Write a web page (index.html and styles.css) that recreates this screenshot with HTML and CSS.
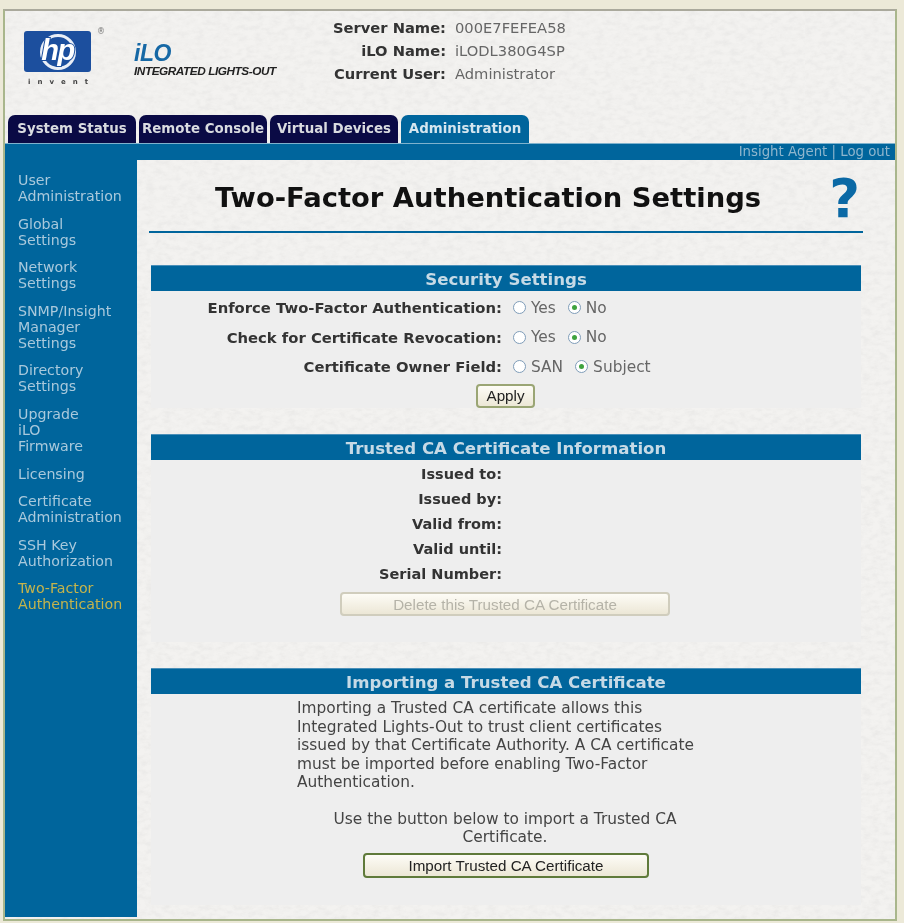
FILE: index.html
```html
<!DOCTYPE html>
<html lang="en">
<head>
    <meta charset="UTF-8">
    <meta name="viewport" content="width=device-width, initial-scale=1.0">
    <title>Two-Factor Authentication Settings - iLO</title>
    <link rel="stylesheet" href="styles.css">
</head>
<body>
    <div class="frame">
        <div class="header">
            <div class="logo">
                <div class="hp-box">
                    <div class="hp-circle"></div>
                    <span class="hp-text">hp</span>
                </div>
                <span class="hp-reg">®</span>
                <div class="hp-invent">invent</div>
            </div>
            <div class="ilo">
                <div class="ilo-name">iLO</div>
                <div class="ilo-sub">INTEGRATED LIGHTS-OUT</div>
            </div>
            <div class="server-info">
                <b>Server Name:</b><span>000E7FEFEA58</span>
                <b>iLO Name:</b><span>iLODL380G4SP</span>
                <b>Current User:</b><span>Administrator</span>
            </div>
        </div>

        <div class="tabs">
            <a class="tab" href="#">System Status</a>
            <a class="tab" href="#">Remote Console</a>
            <a class="tab" href="#">Virtual Devices</a>
            <a class="tab active" href="#">Administration</a>
        </div>

        <div class="strip">
            <a href="#">Insight Agent</a> | <a href="#">Log out</a>
        </div>

        <div class="main">
            <div class="sidebar">
                <a href="#">User<br>Administration</a>
                <a href="#">Global<br>Settings</a>
                <a href="#">Network<br>Settings</a>
                <a href="#">SNMP/Insight<br>Manager<br>Settings</a>
                <a href="#">Directory<br>Settings</a>
                <a href="#">Upgrade<br>iLO<br>Firmware</a>
                <a href="#">Licensing</a>
                <a href="#">Certificate<br>Administration</a>
                <a href="#">SSH Key<br>Authorization</a>
                <a class="current" href="#">Two-Factor<br>Authentication</a>
            </div>

            <div class="content">
                <div class="title-row">
                    <h1>Two-Factor Authentication Settings</h1>
                    <span class="help">?</span>
                </div>

                <div class="section security">
                    <h2>Security Settings</h2>
                    <div class="form-row">
                        <b>Enforce Two-Factor Authentication:</b>
                        <div class="options">
                            <label><input type="radio" name="enforce">Yes</label>
                            <label><input type="radio" name="enforce" checked>No</label>
                        </div>
                    </div>
                    <div class="form-row">
                        <b>Check for Certificate Revocation:</b>
                        <div class="options">
                            <label><input type="radio" name="revoke">Yes</label>
                            <label><input type="radio" name="revoke" checked>No</label>
                        </div>
                    </div>
                    <div class="form-row">
                        <b>Certificate Owner Field:</b>
                        <div class="options">
                            <label><input type="radio" name="owner">SAN</label>
                            <label><input type="radio" name="owner" checked>Subject</label>
                        </div>
                    </div>
                    <button class="btn apply-btn">Apply</button>
                </div>

                <div class="section trusted">
                    <h2>Trusted CA Certificate Information</h2>
                    <div class="info-row"><b>Issued to:</b></div>
                    <div class="info-row"><b>Issued by:</b></div>
                    <div class="info-row"><b>Valid from:</b></div>
                    <div class="info-row"><b>Valid until:</b></div>
                    <div class="info-row"><b>Serial Number:</b></div>
                    <button class="btn delete-btn" disabled>Delete this Trusted CA Certificate</button>
                </div>

                <div class="section importing">
                    <h2>Importing a Trusted CA Certificate</h2>
                    <p class="import-text">Importing a Trusted CA certificate allows this Integrated Lights-Out to trust client certificates issued by that Certificate Authority. A CA certificate must be imported before enabling Two-Factor Authentication.</p>
                    <p class="import-note">Use the button below to import a Trusted CA Certificate.</p>
                    <button class="btn import-btn">Import Trusted CA Certificate</button>
                </div>
            </div>
        </div>
    </div>
</body>
</html>
```
FILE: styles.css
```css
html, body {
    height: 100%;
}
body {
    margin: 0;
    background-color: #ece9d8;
    font-family: "DejaVu Sans", Verdana, sans-serif;
    font-size: 14px;
    color: #333;
    overflow: hidden;
}
a {
    color: inherit;
    text-decoration: none;
}
.frame {
    box-sizing: border-box;
    width: 894px;
    height: 912px;
    margin: 9px 0 0 3px;
    background-color: #f3f2f0;
    background-image: url("data:image/svg+xml,%3Csvg xmlns='http://www.w3.org/2000/svg' width='400' height='400'%3E%3Cfilter id='p'%3E%3CfeTurbulence type='fractalNoise' baseFrequency='0.12 0.2' numOctaves='3'/%3E%3CfeColorMatrix values='0 0 0 0 0.5 0 0 0 0 0.5 0 0 0 0 0.5 0.3 0 0 0 -0.11'/%3E%3C/filter%3E%3Crect width='400' height='400' filter='url(%23p)'/%3E%3C/svg%3E");
    border: 2px solid #a9b68c;
    border-top-color: #aaa99c;
    filter: blur(0.5px);
}

/* top of the page */
.header {
    display: flex;
    height: 104px;
}
.logo {
    position: relative;
    width: 129px;
    flex-shrink: 0;
}
.hp-box {
    position: relative;
    width: 67px;
    height: 41px;
    margin: 20px 0 0 19px;
    background-color: #1c4f9e;
    border-radius: 3px;
    display: flex;
    justify-content: center;
    align-items: center;
}
.hp-circle {
    width: 36px;
    height: 36px;
    border-radius: 50%;
    border: 3px solid #e9eef6;
    box-sizing: border-box;
}
.hp-text {
    position: absolute;
    left: 0;
    right: 0;
    top: 5px;
    padding: 0 4px;
    text-align: center;
    font-family: "Liberation Sans", Arial, sans-serif;
    font-style: italic;
    font-weight: bold;
    font-size: 29px;
    line-height: 29px;
    letter-spacing: -1.5px;
    color: #fff;
    -webkit-text-stroke: 2px #1c4f9e;
    paint-order: stroke fill;
}
.hp-reg {
    position: absolute;
    left: 92px;
    top: 16px;
    font-size: 8px;
    color: #777;
}
.hp-invent {
    margin: 6px 0 0 23px;
    font-family: "DejaVu Sans", sans-serif;
    font-size: 7px;
    font-weight: bold;
    letter-spacing: 7px;
    color: #444;
}
.ilo {
    width: 170px;
    padding-top: 31px;
    flex-shrink: 0;
}
.ilo-name {
    font-family: "Liberation Sans", Arial, sans-serif;
    font-style: italic;
    font-weight: bold;
    font-size: 23px;
    line-height: 23px;
    letter-spacing: -0.5px;
    color: #1668a5;
}
.ilo-sub {
    font-family: "Liberation Sans", Arial, sans-serif;
    font-style: italic;
    font-weight: bold;
    font-size: 11.8px;
    line-height: 12px;
    letter-spacing: -0.45px;
    color: #222;
    white-space: nowrap;
}
.server-info {
    display: grid;
    grid-template-columns: 142px auto;
    column-gap: 9px;
    grid-auto-rows: 23px;
    align-items: center;
    align-content: start;
    padding-top: 5px;
    font-size: 14.7px;
}
.server-info b {
    text-align: right;
    white-space: nowrap;
}
.server-info span {
    color: #666;
}

/* tabs */
.tabs {
    display: flex;
    height: 28px;
    padding-left: 3px;
    gap: 3px;
}
.tab {
    width: 128px;
    border-radius: 7px 7px 0 0;
    background-color: #0a0a45;
    color: #d9dbe0;
    font-weight: bold;
    font-size: 13.4px;
    line-height: 28px;
    text-align: center;
    white-space: nowrap;
}
.tab.active {
    background-color: #00659c;
    color: #d5e6ef;
}
.strip {
    height: 17px;
    background-color: #00659c;
    border-top: 1px solid #7fb2cd;
    box-sizing: border-box;
    padding-right: 5px;
    text-align: right;
    font-size: 13.3px;
    line-height: 16px;
    color: #8fb6cd;
}

/* sidebar and content */
.main {
    display: flex;
    height: 757px;
}
.sidebar {
    width: 132px;
    flex-shrink: 0;
    box-sizing: border-box;
    padding: 12px 0 0 13px;
    background-color: #00659c;
    display: flex;
    flex-direction: column;
    gap: 11.6px;
    font-size: 14.2px;
    line-height: 16px;
    color: #a9c9dc;
}
.sidebar a.current {
    color: #c4b44c;
}
.content {
    flex-grow: 1;
    padding: 0 34px 0 14px;
}
.title-row {
    position: relative;
    height: 73px;
    margin: 0 -2px;
    padding-right: 36px;
    border-bottom: 2px solid #00659c;
    box-sizing: border-box;
    text-align: center;
}
h1 {
    margin: 0;
    padding-top: 20px;
    font-size: 27.4px;
    line-height: 36px;
    white-space: nowrap;
    color: #111;
}
.help {
    position: absolute;
    right: 3px;
    top: 12px;
    font-size: 53px;
    line-height: 53px;
    font-weight: bold;
    color: #0b69a5;
}
.section {
    background-color: #eeeeee;
    text-align: center;
}
.section h2 {
    margin: 0;
    height: 26px;
    background-color: #00659c;
    border-top: 1px solid #4b8fb8;
    box-sizing: border-box;
    font-size: 16.6px;
    line-height: 27px;
    font-weight: bold;
    color: #c6dae6;
}
.security {
    margin-top: 32px;
    height: 143px;
    margin-bottom: 26px;
}
.trusted {
    height: 208px;
}
.importing {
    margin-top: 26px;
    height: 237px;
}
.form-row {
    display: grid;
    grid-template-columns: 351px auto;
    column-gap: 11px;
    height: 29.5px;
    align-items: center;
    text-align: right;
}
.form-row:first-of-type {
    margin-top: 2px;
}
.form-row b {
    font-size: 14.8px;
    white-space: nowrap;
}
.options {
    display: flex;
    gap: 12px;
    font-size: 15.4px;
    color: #666;
}
.options label {
    display: flex;
    align-items: center;
}
.options input {
    appearance: none;
    width: 13px;
    height: 13px;
    margin: 0 5px 0 0;
    border: 1px solid #7f9db9;
    border-radius: 50%;
    background-color: #fff;
    display: grid;
    place-content: center;
}
.options input:checked::before {
    content: "";
    width: 5px;
    height: 5px;
    border-radius: 50%;
    background-color: #3fa33f;
}
.info-row {
    height: 25px;
    padding-right: 359px;
    font-size: 14.5px;
    line-height: 25px;
    text-align: right;
}
.info-row:first-of-type {
    margin-top: 2px;
}
.btn {
    display: block;
    font-family: "Liberation Sans", Arial, sans-serif;
    font-size: 15.2px;
    color: #222;
    background-image: linear-gradient(#fdfcf6, #ece7d6);
    border: 2px solid #5f7a3a;
    border-radius: 4px;
    padding: 0;
}
.apply-btn {
    width: 59px;
    height: 24px;
    margin: 2px 0 0 325px;
    border-color: #9aa574;
}
.delete-btn {
    width: 330px;
    height: 24px;
    margin: 5px 0 0 189px;
    color: #b5b3a8;
    border-color: #d0cdbd;
}
.import-text {
    width: 404px;
    margin: 5px 0 0 146px;
    font-size: 15.4px;
    line-height: 18.5px;
    text-align: left;
    color: #444;
}
.import-note {
    width: 360px;
    margin: 18px 0 0 174px;
    font-size: 15.4px;
    line-height: 18px;
    color: #444;
}
.import-btn {
    width: 286px;
    height: 25px;
    margin: 7.5px 0 0 212px;
}
```
